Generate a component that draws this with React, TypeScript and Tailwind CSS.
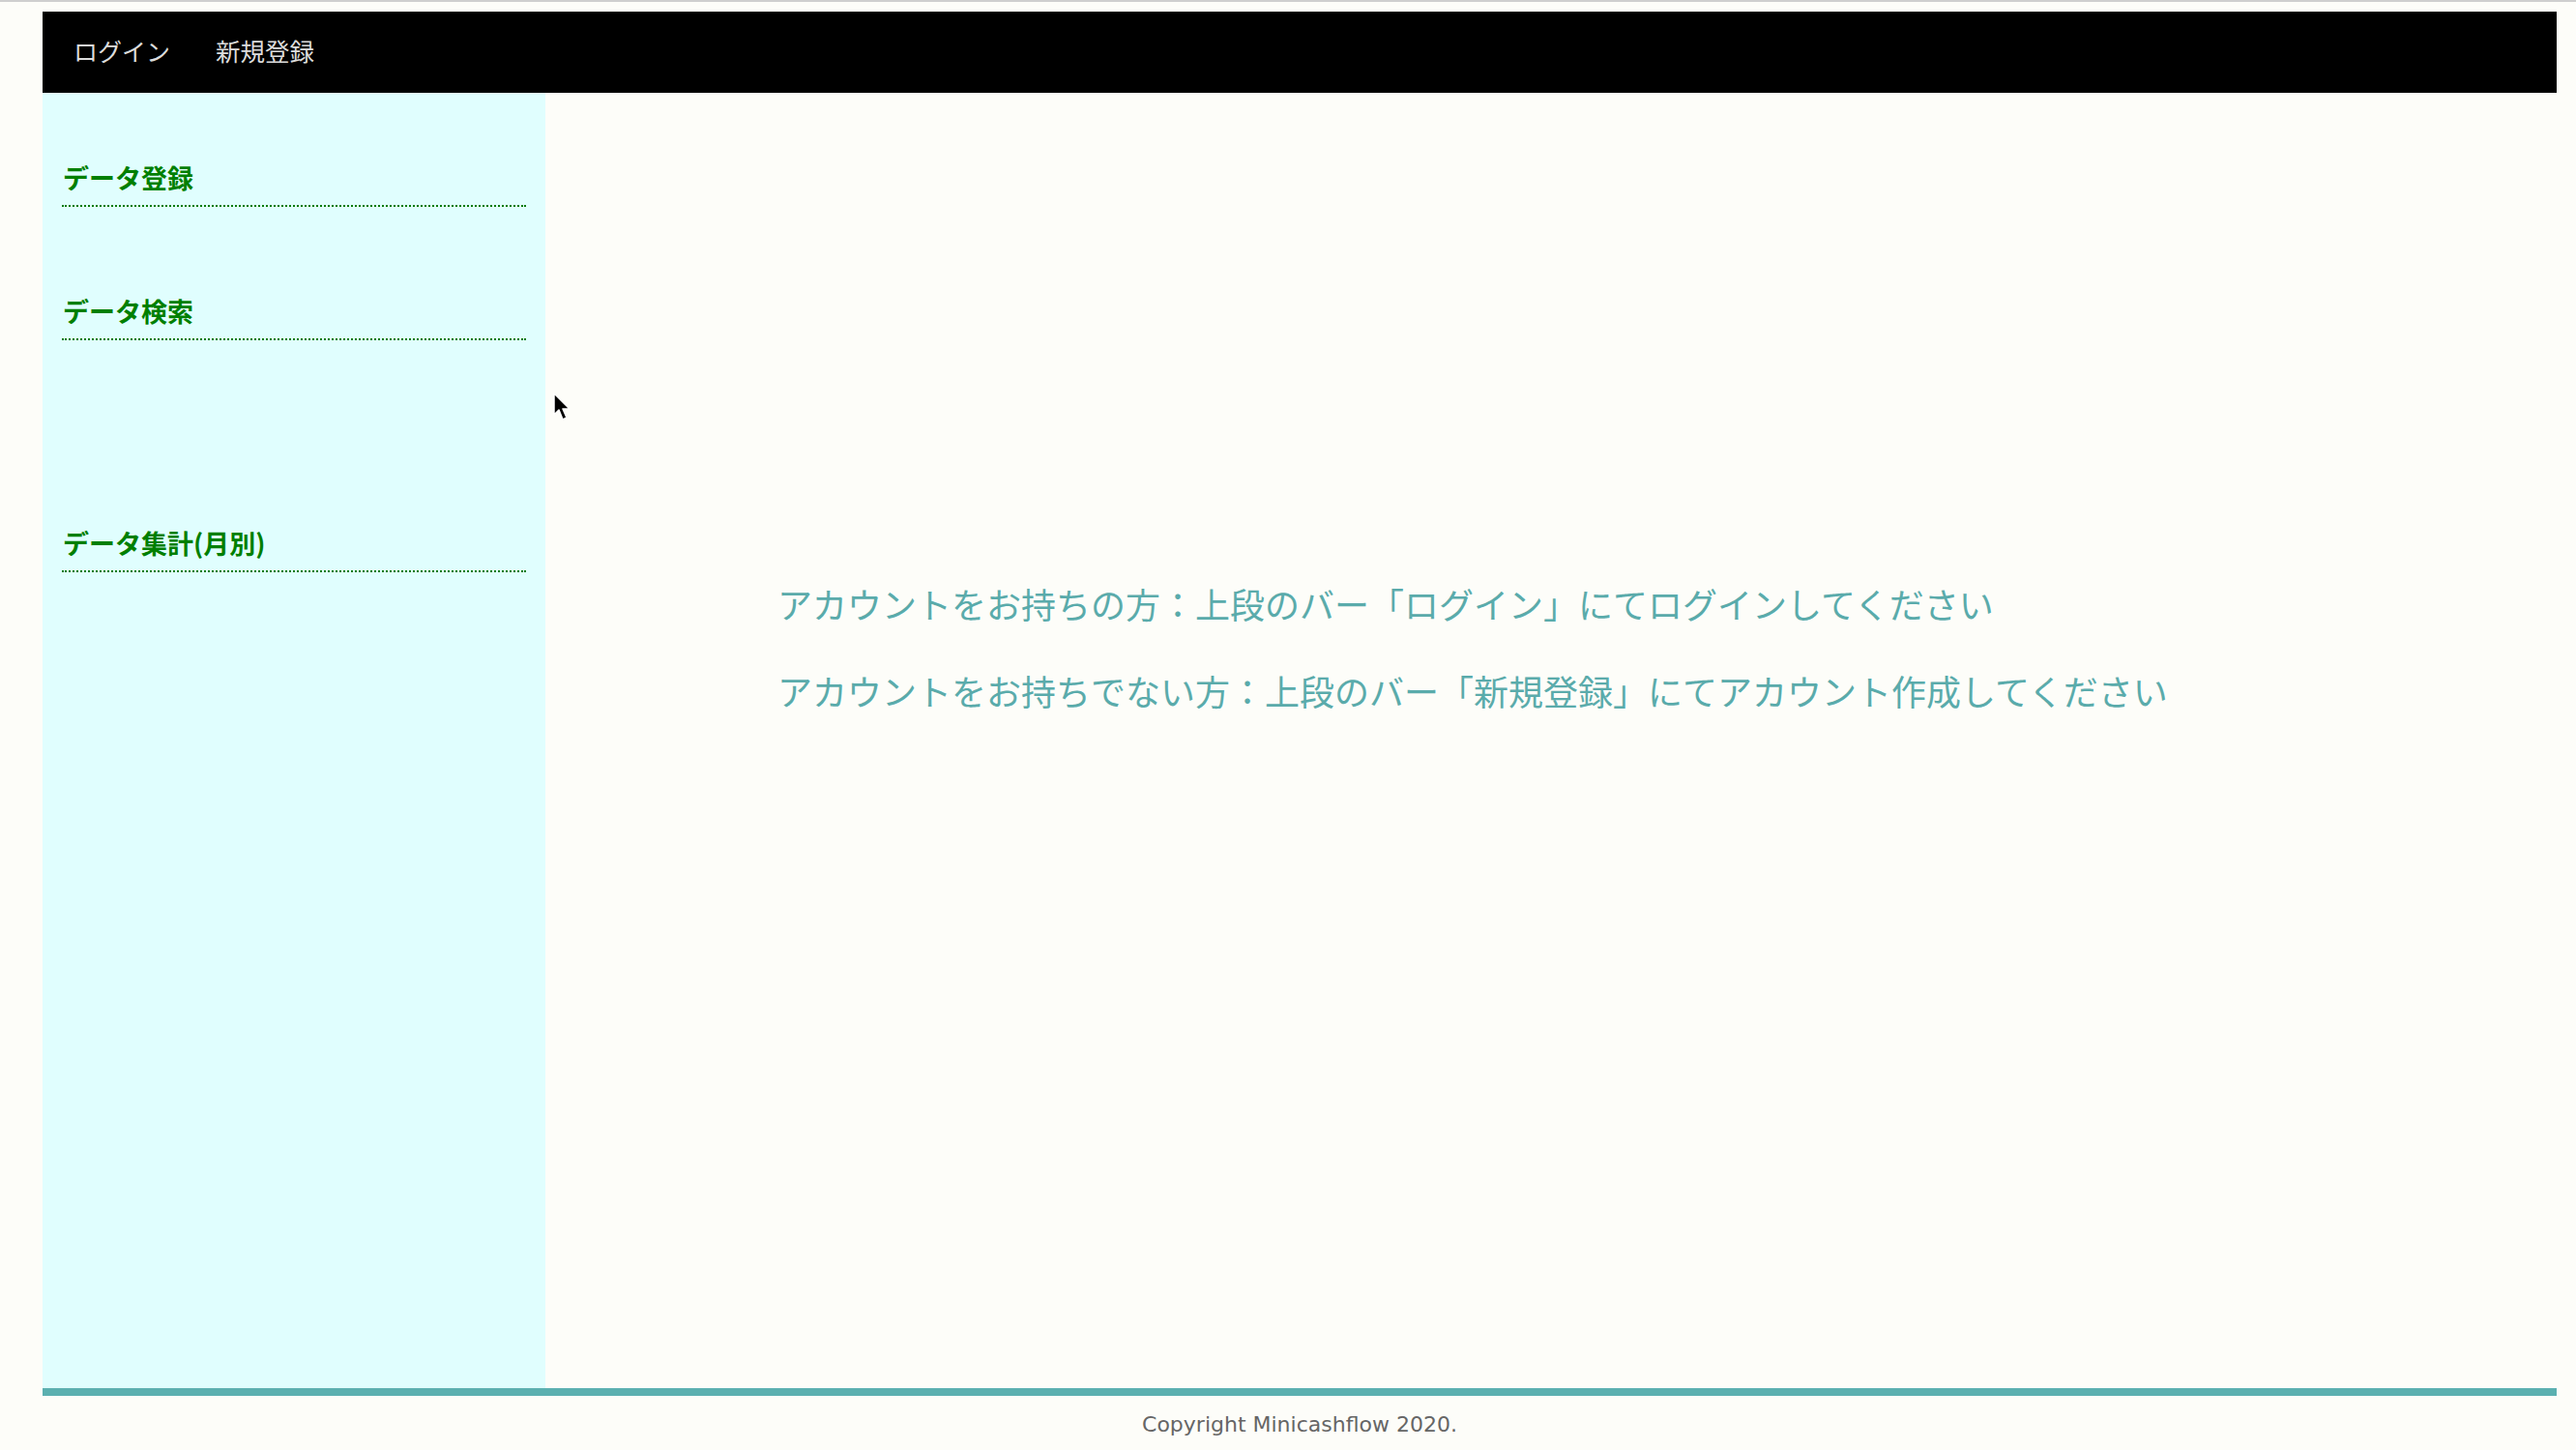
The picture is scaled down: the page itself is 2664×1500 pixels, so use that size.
import React from "react";

const jp = { fontFamily: '"Noto Sans CJK JP", "Noto Sans", sans-serif' };

export default function App() {
  return (
    <div className="relative min-h-screen w-[2664px] bg-[#fdfdf9]" style={jp}>
      <div className="h-[2px] bg-[#cfcfcf]" />
      <div className="ml-[44px] mt-[10px] w-[2600px]">
        <header className="flex h-[84px] items-center bg-black pb-[3px] pl-[32px] text-[25px] text-[#dcdcdc]">
          <a className="mr-[47px] cursor-pointer">ログイン</a>
          <a className="cursor-pointer text-[25.5px]">新規登録</a>
        </header>
        <div className="flex h-[1340px]">
          <aside className="w-[520px] shrink-0 bg-[#e0fefe] px-[20px] pt-[68px]">
            <h3 className="border-b-2 border-dotted border-[#007a00] pb-[8px] pl-[1px] text-[27px] font-bold leading-[40px] text-[#007f00]">
              データ登録
            </h3>
            <h3 className="mt-[88px] border-b-2 border-dotted border-[#007a00] pb-[8px] pl-[1px] text-[27px] font-bold leading-[40px] text-[#007f00]">
              データ検索
            </h3>
            <h3 className="mt-[190px] border-b-2 border-dotted border-[#007a00] pb-[8px] pl-[1px] text-[27px] font-bold leading-[40px] text-[#007f00]">
              データ集計(月別)
            </h3>
          </aside>
          <main className="flex-1 pl-[240px] pt-[501px] text-[36px] leading-[54px] text-[#5aabab]">
            <p>アカウントをお持ちの方：上段のバー「ログイン」にてログインしてください</p>
            <p className="mt-[36px]">アカウントをお持ちでない方：上段のバー「新規登録」にてアカウント作成してください</p>
          </main>
        </div>
        <div className="h-[8px] bg-[#5bb0b0]" />
        <footer
          className="flex h-[56px] items-center justify-center pt-[2px] text-[22px] text-[#666666]"
          style={{ fontFamily: '"DejaVu Sans", Verdana, sans-serif' }}
        >
          Copyright Minicashflow 2020.
        </footer>
      </div>
      <svg
        className="absolute left-[572px] top-[406px]"
        width="20"
        height="30"
        viewBox="0 0 20 30"
      >
        <path d="M1 1 L1 23 L6 18 L10 28 L14 26 L10 17 L17 17 Z" fill="#000" stroke="#fff" strokeWidth="1.5" strokeLinejoin="round" />
      </svg>
    </div>
  );
}
